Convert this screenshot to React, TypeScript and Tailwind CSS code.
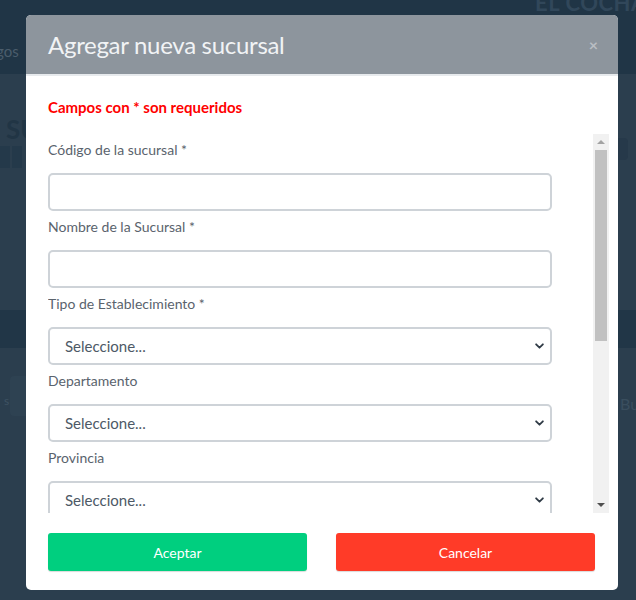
const campos: { label: string; tipo: 'input' | 'select' }[] = [
  { label: 'Código de la sucursal *', tipo: 'input' },
  { label: 'Nombre de la Sucursal *', tipo: 'input' },
  { label: 'Tipo de Establecimiento *', tipo: 'select' },
  { label: 'Departamento', tipo: 'select' },
  { label: 'Provincia', tipo: 'select' },
  { label: 'Distrito', tipo: 'select' },
  { label: 'Dirección *', tipo: 'input' },
  { label: 'Teléfono', tipo: 'input' },
  { label: 'Correo electrónico', tipo: 'input' },
];

function Chevron() {
  return (
    <svg
      className="pointer-events-none absolute right-[8px] top-1/2 -translate-y-1/2"
      width="9"
      height="9"
      viewBox="0 0 16 16"
      fill="none"
      stroke="#2f3a45"
      strokeWidth="3.2"
      strokeLinecap="round"
      strokeLinejoin="round"
    >
      <path d="M2 5l6 6 6-6" />
    </svg>
  );
}

function Campo({ label, tipo }: { label: string; tipo: 'input' | 'select' }) {
  return (
    <div className="pb-[6px]">
      <label className="block text-[14px] leading-[20px] text-[#5a636d] mb-[13px]">{label}</label>
      {tipo === 'input' ? (
        <input
          type="text"
          className="block w-[504px] h-[38px] px-3 bg-white border-2 border-[#ced3d8] rounded-[5px] text-[15px] text-[#495057] outline-none"
        />
      ) : (
        <div className="relative w-[504px]">
          <select className="block w-full h-[38px] pl-[15px] pr-8 appearance-none bg-white border-2 border-[#ced3d8] rounded-[5px] text-[15px] text-[#4d5966] outline-none">
            <option>Seleccione...</option>
          </select>
          <Chevron />
        </div>
      )}
    </div>
  );
}

function Barra() {
  return (
    <div className="w-[16px] shrink-0 bg-[#f1f1f1] flex flex-col items-center">
      <div className="h-[16px] w-full flex items-center justify-center">
        <div className="w-0 h-0 border-l-[4px] border-r-[4px] border-b-[4px] border-l-transparent border-r-transparent border-b-[#a3a3a3]" />
      </div>
      <div className="w-[12px] h-[191px] bg-[#c1c1c1]" />
      <div className="flex-1" />
      <div className="h-[16px] w-full flex items-center justify-center">
        <div className="w-0 h-0 border-l-[4px] border-r-[4px] border-t-[4px] border-l-transparent border-r-transparent border-t-[#505050]" />
      </div>
    </div>
  );
}

function Fondo() {
  return (
    <div className="absolute inset-0 flex flex-col bg-[#2b3e4e] overflow-hidden">
      <div className="h-[74px] shrink-0 bg-[#203546] relative">
        <span className="absolute left-[535px] top-[-14px] text-[22px] font-bold text-[#31475a] tracking-wide whitespace-nowrap">EL COCHARCO</span>
        <span className="absolute left-[-4px] top-[40px] text-[15px] text-[#4b5d6c]">gos</span>
      </div>
      <div className="relative h-[236px] shrink-0">
        <span className="absolute left-[6px] top-[36px] text-[26px] font-bold text-[#213545]">SU</span>
        <div className="absolute left-0 top-[72px] flex gap-[2px]">
          <div className="w-[10px] h-[22px] bg-[#24394a]" />
          <div className="w-[10px] h-[22px] bg-[#24394a]" />
        </div>
        <div className="absolute right-[8px] top-[64px] w-[40px] h-[22px] rounded bg-[#26394a]" />
      </div>
      <div className="h-[38px] shrink-0 bg-[#213647]" />
      <div className="relative h-[120px] shrink-0">
        <span className="absolute left-[4px] top-[44px] text-[12px] text-[#3e5262]">s</span>
        <div className="absolute left-[10px] top-[28px] w-[40px] h-[40px] rounded bg-[#2e4252]" />
        <span className="absolute left-[620px] top-[44px] text-[16px] text-[#3a4e5e] whitespace-nowrap">Bus</span>
      </div>
    </div>
  );
}

export default function App() {
  return (
    <div className="relative w-[636px] h-[600px] overflow-hidden font-['Lato',sans-serif]">
      <Fondo />
      <div className="absolute left-[26px] top-[15px] w-[592px] h-[575px] bg-white rounded-[5px] overflow-hidden flex flex-col">
        <div className="h-[59px] shrink-0 bg-[#8d959d] flex items-center justify-between pl-[22px] pr-[20px] border-b-2 border-[#e7eaed] box-content">
          <h2 className="text-[24px] leading-none text-[#f1f3f5] tracking-[-0.3px]">Agregar nueva sucursal</h2>
          <span className="text-[16px] font-bold text-[#b9bec3] leading-none">×</span>
        </div>
        <div className="pl-[22px] pt-[21px]">
          <p className="text-[15px] leading-[20px] font-bold text-[#ff0000]">Campos con * son requeridos</p>
          <div className="mt-[17px] h-[379px] w-[561px] flex">
            <div className="flex-1 overflow-hidden pt-[6px]">
              {campos.map((c) => (
                <Campo key={c.label} label={c.label} tipo={c.tipo} />
              ))}
            </div>
            <Barra />
          </div>
          <div className="mt-[20px] flex gap-[29px]">
            <button className="w-[259px] h-[38px] rounded-[3px] bg-[#00cf7f] text-white text-[14px] shadow-[0_1px_1px_rgba(0,0,0,0.15)]">
              Aceptar
            </button>
            <button className="w-[259px] h-[38px] rounded-[3px] bg-[#ff3b28] text-white text-[14px] shadow-[0_1px_1px_rgba(0,0,0,0.15)]">
              Cancelar
            </button>
          </div>
        </div>
      </div>
    </div>
  );
}
